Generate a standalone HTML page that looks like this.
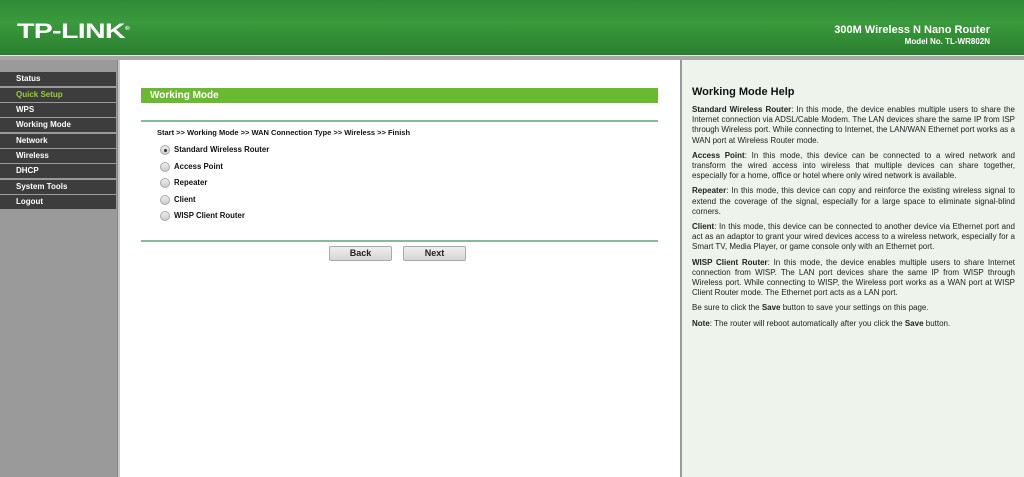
<!DOCTYPE html>
<html><head><meta charset="utf-8"><style>
*{margin:0;padding:0;box-sizing:border-box}
body{width:1024px;height:477px;overflow:hidden;font-family:"Liberation Sans",sans-serif;background:#fff;position:relative}
#hdr{position:absolute;left:0;top:0;width:1024px;height:55px;background:linear-gradient(#2f8a36,#3a9a3c 40%,#2a7f2f);}
#hdr .logo{position:absolute;left:17px;top:19px;color:#fff;font-weight:bold;font-size:21px;line-height:21px;transform:scaleX(1.36);transform-origin:0 0;letter-spacing:-0.5px}
#hdr .t1{position:absolute;right:34px;top:24px;color:#fff;font-weight:bold;font-size:11px}
#hdr .t2{position:absolute;right:34px;top:37px;color:#fff;font-weight:bold;font-size:8px}
#band{position:absolute;top:55px;left:0;width:1024px;height:5px;background:#a8a8a8;border-top:1px solid #e8e8e8}
#side{position:absolute;left:0;top:60px;width:117px;height:417px;background:#9a9a9a}
#side div{position:absolute;left:0;width:116px;height:14px;background:#3d3d3d;color:#fff;font-weight:bold;font-size:8px;padding-left:16px;line-height:14px}
#sep{position:absolute;left:117px;top:60px;width:3px;height:417px;background:#c8c8c8;border-left:1px solid #888}
#help{position:absolute;left:680px;top:60px;width:344px;height:417px;background:#eef3ec;border-left:2px solid #999}
#help h2{position:absolute;left:10px;top:26px;font-size:11px;font-weight:bold;color:#111}
#help .txt{position:absolute;left:10px;top:45px;width:323px;font-size:8px;line-height:10.2px;color:#222;text-align:justify}
#help p{margin-bottom:5px}
.bar{position:absolute;left:141px;top:88px;width:517px;height:15px;background:#6aba30;color:#fff;font-weight:bold;font-size:10px;padding-left:9px;line-height:15px}
.line{position:absolute;left:141px;width:517px;height:2px;background:#8ab89a}
.crumb{position:absolute;left:157px;top:128px;font-size:7.5px;font-weight:bold;color:#111}
.r{position:absolute;left:160px;font-size:7.8px;font-weight:bold;color:#111}
.r i{position:absolute;left:0;top:0;width:10px;height:10px;border-radius:50%;border:1px solid #aaa;background:linear-gradient(#eee,#ccc)}
.r i.on:after{content:"";position:absolute;left:2.5px;top:2.5px;width:3px;height:3px;border-radius:50%;background:#333}
.r span{position:absolute;left:14px;top:0;white-space:nowrap;line-height:10px}
.btn{position:absolute;top:246px;width:63px;height:15px;background:linear-gradient(#eee,#d6d6d6);border:1px solid #aaa;border-radius:2px;font-size:9px;font-weight:bold;color:#222;text-align:center;line-height:13px}
</style></head><body>
<div id="hdr"><div class="logo">TP-LINK<sup style="font-size:5px">®</sup></div><div class="t1">300M Wireless N Nano Router</div><div class="t2">Model No. TL-WR802N</div></div>
<div id="band"></div>
<div id="side">
<div style="top:12px">Status</div>
<div style="top:28px;color:#9acd32">Quick Setup</div>
<div style="top:43px">WPS</div>
<div style="top:58px">Working Mode</div>
<div style="top:74px">Network</div>
<div style="top:89px">Wireless</div>
<div style="top:104px">DHCP</div>
<div style="top:120px">System Tools</div>
<div style="top:135px">Logout</div>
</div>
<div id="sep"></div>
<div class="bar">Working Mode</div>
<div class="line" style="top:120px"></div>
<div class="crumb">Start &gt;&gt; Working Mode &gt;&gt; WAN Connection Type &gt;&gt; Wireless &gt;&gt; Finish</div>
<div class="r" style="top:145px"><i class="on"></i><span>Standard Wireless Router</span></div>
<div class="r" style="top:162px"><i></i><span>Access Point</span></div>
<div class="r" style="top:178px"><i></i><span>Repeater</span></div>
<div class="r" style="top:195px"><i></i><span>Client</span></div>
<div class="r" style="top:211px"><i></i><span>WISP Client Router</span></div>
<div class="line" style="top:240px"></div>
<div class="btn" style="left:329px">Back</div>
<div class="btn" style="left:403px">Next</div>
<div id="help"><h2>Working Mode Help</h2><div class="txt">
<p><b>Standard Wireless Router</b>: In this mode, the device enables multiple users to share the Internet connection via ADSL/Cable Modem. The LAN devices share the same IP from ISP through Wireless port. While connecting to Internet, the LAN/WAN Ethernet port works as a WAN port at Wireless Router mode.</p>
<p><b>Access Point</b>: In this mode, this device can be connected to a wired network and transform the wired access into wireless that multiple devices can share together, especially for a home, office or hotel where only wired network is available.</p>
<p><b>Repeater</b>: In this mode, this device can copy and reinforce the existing wireless signal to extend the coverage of the signal, especially for a large space to eliminate signal-blind corners.</p>
<p><b>Client</b>: In this mode, this device can be connected to another device via Ethernet port and act as an adaptor to grant your wired devices access to a wireless network, especially for a Smart TV, Media Player, or game console only with an Ethernet port.</p>
<p><b>WISP Client Router</b>: In this mode, the device enables multiple users to share Internet connection from WISP. The LAN port devices share the same IP from WISP through Wireless port. While connecting to WISP, the Wireless port works as a WAN port at WISP Client Router mode. The Ethernet port acts as a LAN port.</p>
<p>Be sure to click the <b>Save</b> button to save your settings on this page.</p>
<p><b>Note</b>: The router will reboot automatically after you click the <b>Save</b> button.</p>
</div></div>
</body></html>
